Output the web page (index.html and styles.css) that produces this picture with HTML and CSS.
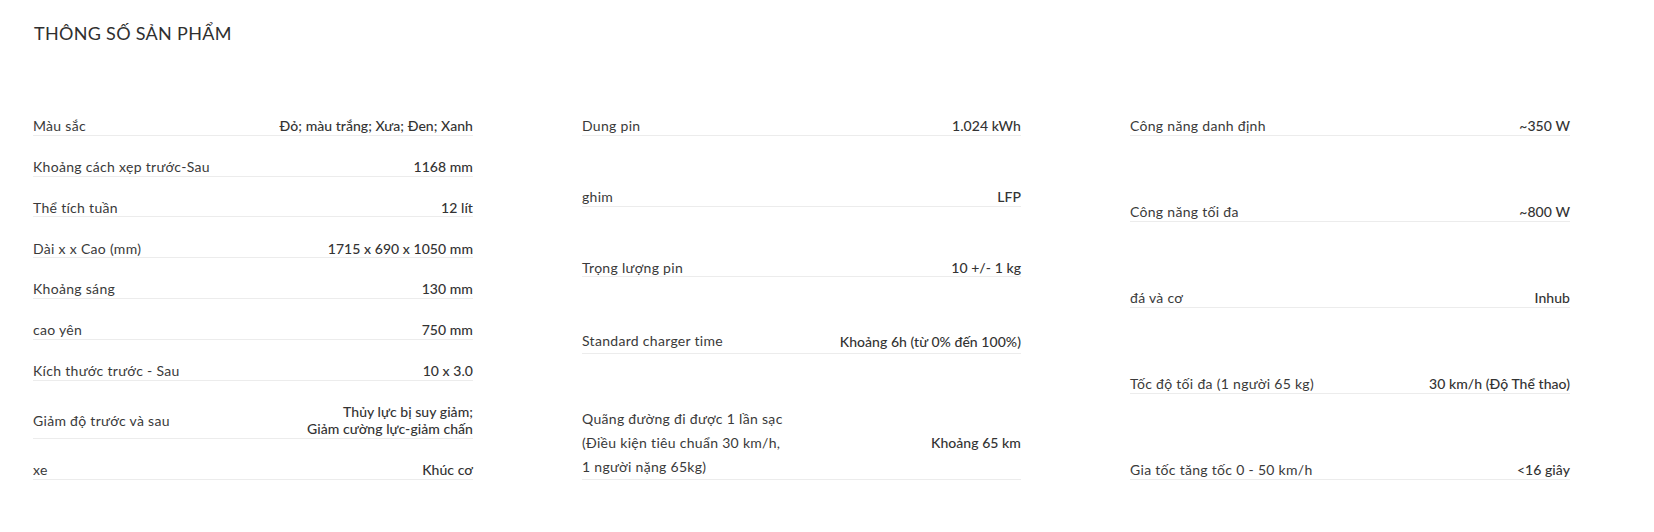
FILE: index.html
```html
<!DOCTYPE html>
<html lang="vi">
<head>
<meta charset="utf-8">
<title>Thông số sản phẩm</title>
<link rel="stylesheet" href="styles.css">
</head>
<body>
<section class="specs">
  <h2 class="specs-title">THÔNG SỐ SẢN PHẨM</h2>
  <div class="specs-grid">
    <div class="specs-col">
      <div class="spec-row"><div class="spec-label">Màu sắc</div><div class="spec-value">Đỏ; màu trắng; Xưa; Đen; Xanh</div></div>
      <div class="spec-row"><div class="spec-label">Khoảng cách xẹp trước-Sau</div><div class="spec-value">1168 mm</div></div>
      <div class="spec-row"><div class="spec-label">Thể tích tuần</div><div class="spec-value">12 lít</div></div>
      <div class="spec-row"><div class="spec-label">Dài x x Cao (mm)</div><div class="spec-value">1715 x 690 x 1050 mm</div></div>
      <div class="spec-row"><div class="spec-label">Khoảng sáng</div><div class="spec-value">130 mm</div></div>
      <div class="spec-row"><div class="spec-label">cao yên</div><div class="spec-value">750 mm</div></div>
      <div class="spec-row"><div class="spec-label">Kích thước trước - Sau</div><div class="spec-value">10 x 3.0</div></div>
      <div class="spec-row"><div class="spec-label">Giảm độ trước và sau</div><div class="spec-value">Thủy lực bị suy giảm;<br>Giảm cường lực-giảm chấn</div></div>
      <div class="spec-row"><div class="spec-label">xe</div><div class="spec-value">Khúc cơ</div></div>
    </div>
    <div class="specs-col">
      <div class="spec-row"><div class="spec-label">Dung pin</div><div class="spec-value">1.024 kWh</div></div>
      <div class="spec-row"><div class="spec-label">ghim</div><div class="spec-value">LFP</div></div>
      <div class="spec-row"><div class="spec-label">Trọng lượng pin</div><div class="spec-value">10 +/- 1 kg</div></div>
      <div class="spec-row"><div class="spec-label spec-label--tall">Standard charger time</div><div class="spec-value">Khoảng 6h (từ 0% đến 100%)</div></div>
      <div class="spec-row"><div class="spec-label spec-label--tall">Quãng đường đi được 1 lần sạc<br>(Điều kiện tiêu chuẩn 30 km/h,<br>1 người nặng 65kg)</div><div class="spec-value">Khoảng 65 km</div></div>
    </div>
    <div class="specs-col">
      <div class="spec-row"><div class="spec-label">Công năng danh định</div><div class="spec-value">~350 W</div></div>
      <div class="spec-row"><div class="spec-label">Công năng tối đa</div><div class="spec-value">~800 W</div></div>
      <div class="spec-row"><div class="spec-label">đá và cơ</div><div class="spec-value">Inhub</div></div>
      <div class="spec-row"><div class="spec-label">Tốc độ tối đa (1 người 65 kg)</div><div class="spec-value">30 km/h (Độ Thể thao)</div></div>
      <div class="spec-row"><div class="spec-label">Gia tốc tăng tốc 0 - 50 km/h</div><div class="spec-value">&lt;16 giây</div></div>
    </div>
  </div>
</section>
</body>
</html>
```
FILE: styles.css
```css
* { box-sizing: border-box; }
html, body { margin: 0; padding: 0; background: #fff; }
body {
  font-family: "Lato", "Noto Sans", sans-serif;
  color: #333;
}
.specs {
  padding: 22px 0 0 34px;
}
.specs-title {
  margin: 0;
  font-size: 18px;
  font-weight: 400;
  line-height: 22px;
  color: #2f2f2f;
  letter-spacing: 0.3px;
}
.specs-grid {
  margin-top: 51px;
  display: grid;
  grid-template-columns: 440px 439px 440px;
  column-gap: 109px;
  margin-left: -1px;
}
.specs-col {
  display: flex;
  flex-direction: column;
  justify-content: space-between;
}
.spec-row {
  display: flex;
  justify-content: space-between;
  align-items: center;
  padding: 22.3px 0 0;
  border-bottom: 1px solid #ececec;
  font-size: 14px;
  line-height: 17.5px;
}
.spec-label {
  font-weight: 400;
  color: #3a3a3a;
  letter-spacing: 0.3px;
}
.spec-label--tall {
  line-height: 24px;
}
.spec-value {
  text-align: right;
  font-weight: 500;
  color: #333;
  letter-spacing: 0.05px;
}
```
